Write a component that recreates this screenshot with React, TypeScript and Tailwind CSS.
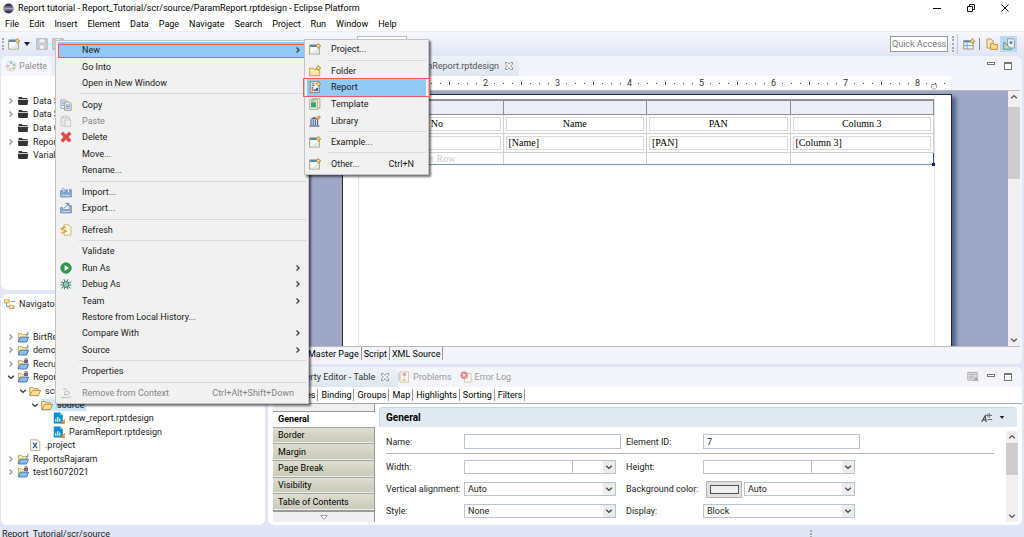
import type { ReactNode } from "react";

/* ---------- icons ---------- */

type IconName =
  | "wizard" | "folderNew" | "report" | "template" | "library" | "copy" | "paste" | "delete"
  | "import" | "export" | "refresh" | "run" | "debug" | "remove" | "project" | "projectJ"
  | "folder" | "darkFolder" | "design" | "xfile" | "palette" | "navigator" | "problems"
  | "errorLog" | "save" | "perspective" | "resource" | "design2" | "pin" | "az";

const sparkle = (
  <path d="M9.4 0.4 L10.3 2.1 L12 3 L10.3 3.9 L9.4 5.6 L8.5 3.9 L6.800 3 L8.5 2.1Z" fill="#f6dc94" stroke="#b98a2e" strokeWidth="0.8" />
);

const drawings: Record<IconName, ReactNode> = {
  wizard: (
    <>
      <rect x="0.7" y="2" width="9.6" height="9" fill="#f7fbfe" stroke="#a9925c" strokeWidth="0.9" />
      <rect x="1.2" y="1.8" width="8" height="2.2" fill="#4d86bd" />
      <path d="M1.5 10.5 L9.8 10.5 L9.8 5 Z" fill="#d8ebf8" />
      {sparkle}
    </>
  ),
  folderNew: (
    <>
      <path d="M0.7 3.2h3.6l1 1.3h5.4v6.3H0.7z" fill="#fbe3a4" stroke="#c9973f" strokeWidth="0.9" />
      <path d="M1.4 6h8.8" stroke="#fff4cf" />
      {sparkle}
    </>
  ),
  report: (
    <>
      <rect x="1.2" y="0.8" width="9" height="10.6" fill="#f6f8fb" stroke="#8b7b55" strokeWidth="0.9" />
      <path d="M2.600 2.800h3M2.600 4.600h3" stroke="#4d6fa0" />
      <rect x="2.600" y="6" width="1.8" height="1.8" fill="#33a05a" />
      <rect x="2.600" y="8.4" width="1.8" height="1.8" fill="#d6404a" />
      <rect x="5" y="8" width="1.8" height="2.200" fill="#d6404a" />
      <rect x="7" y="6.8" width="2.2" height="3.4" fill="#2c6fd1" />
      {sparkle}
    </>
  ),
  template: (
    <>
      <path d="M3.5 0.6h7.4v9.4H3.5z" fill="#f6edd0" stroke="#b59b5e" strokeWidth="0.8" />
      <path d="M0.8 1.8h7.6v9.6H0.8z" fill="#eef6ec" stroke="#8f9d72" strokeWidth="0.8" />
      <rect x="2" y="4.2" width="5" height="5.2" fill="#49a06d" />
      <path d="M2 3h4" stroke="#7c9a8a" strokeWidth="0.8" />
    </>
  ),
  library: (
    <>
      <path d="M0.6 4.6 L5.2 1.8 L9.8 4.6z" fill="#4a6c9e" />
      <path d="M2 5v5M4.2 5v5M6.4 5v5M8.6 5v5" stroke="#39598c" strokeWidth="1.1" />
      <path d="M0.4 11h10" stroke="#39598c" strokeWidth="1.2" />
      <path d="M7 4.5 8 2 10.5 0.6 11.6 2.2 9.4 4.4z" fill="#f0a63c" stroke="#b87a24" strokeWidth="0.4" />
    </>
  ),
  copy: (
    <>
      <path d="M0.8 0.8h4.4l1.6 1.6v7H0.8z" fill="#eaf1fa" stroke="#8a9cb8" strokeWidth="0.8" />
      <path d="M4.6 2.8h4.6l2 2v6.6H4.6z" fill="#dbe8f8" stroke="#a88f52" strokeWidth="0.8" />
      <path d="M5.8 6h4M5.8 7.6h4M5.8 9.2h4M1.8 3h2M1.8 4.8h2M1.8 6.6h2" stroke="#5a8ac6" strokeWidth="0.8" />
    </>
  ),
  paste: (
    <>
      <path d="M1 2h8.4v9H1z" fill="#e8e8e8" stroke="#c2c2c2" strokeWidth="0.9" />
      <path d="M3.4 1h3.4v2H3.4zM5 5h5.6v6.4H5z" fill="#f3f3f3" stroke="#bdbdbd" strokeWidth="0.8" />
    </>
  ),
  delete: (
    <path d="M3 0.9 6 3.8 9 0.9 11.1 2.8 8.3 6 11.1 9.3 9 11.2 6 8.3 3 11.2 0.9 9.3 3.7 6 0.9 2.8z" fill="#e5474b" stroke="#c9363c" strokeWidth="0.5" />
  ),
  import: (
    <>
      <path d="M0.6 4.6v6.4h10.8V3.6h-2v3.2H3V4.6z" fill="#8faed6" stroke="#6284b8" strokeWidth="0.7" />
      <path d="M2.4 2 6.8 5.6M7 3v3H4" fill="none" stroke="#4d7cba" strokeWidth="1" />
      <path d="M2 9.6h8" stroke="#d7e4f4" strokeWidth="0.8" />
    </>
  ),
  export: (
    <>
      <path d="M0.6 5.6V11h10.8V3.6h-1.6v4H2.6v-2z" fill="#8faed6" stroke="#6284b8" strokeWidth="0.7" />
      <path d="M4 6.4 8.6 1.8M5.6 1.5h3.2v3" fill="none" stroke="#4d7cba" strokeWidth="1" />
      <path d="M2 9.6h8" stroke="#d7e4f4" strokeWidth="0.8" />
    </>
  ),
  refresh: (
    <>
      <path d="M4 0.8h4.8l2.2 2.4v8H4z" fill="#fdf7e3" stroke="#c4a868" strokeWidth="0.8" />
      <path d="M6 4C5 2.600 2.400 2.800 2 5M0.600 4.200 2 5.600 3.600 4.400M1.400 8C2.400 9.600 5 9.200 5.400 7M3.800 7.600 5.400 6.400 6.800 7.800" fill="none" stroke="#dba035" strokeWidth="1.2" />
    </>
  ),
  run: (
    <>
      <circle cx="6" cy="6" r="5.3" fill="#2f9a4a" stroke="#1f7a3b" strokeWidth="0.6" />
      <path d="M4.6 2.9v6.2L9 6z" fill="#fff" />
    </>
  ),
  debug: (
    <>
      <path d="M0.8 4.2 3.6 5M11.2 4.2 8.4 5M0.6 7h10.8M1.4 10.4 3.8 8.4M10.6 10.4 8.2 8.4M4 1.2 5 3.6M8 1.2 7 3.6M4.4 11.4V9M7.6 11.4V9" stroke="#3f7a69" strokeWidth="1" />
      <ellipse cx="6" cy="6.4" rx="2.8" ry="3.1" fill="#8cc5ae" stroke="#3a7666" strokeWidth="0.9" />
    </>
  ),
  remove: (
    <>
      <path d="M3 2.4c2-1.4 4 0 4 2 2.4-.6 3 3 .8 3.4H4" fill="none" stroke="#b9b9b9" strokeWidth="1" />
      <path d="M5 4v4M1 10.6h8M9 9.2l2.4 1.6" stroke="#b9b9b9" strokeWidth="1" />
    </>
  ),
  project: (
    <>
      <path d="M1.4 10V2.4h3l.8 1h4.6V10z" fill="#fae5a8" stroke="#c29a4a" strokeWidth="0.8" />
      <path d="M1.2 11 3.2 6.2h8.4L9.6 11z" fill="#8dbbea" stroke="#2f67ad" strokeWidth="0.8" />
      <path d="M10.9 0.8v2.6c0 1-1.4 1-1.4 0" fill="none" stroke="#3673c0" strokeWidth="0.9" />
    </>
  ),
  projectJ: (
    <>
      <path d="M1.4 10V2.4h3l.8 1h4.6V10z" fill="#fae5a8" stroke="#c29a4a" strokeWidth="0.8" />
      <path d="M1.2 11 3.2 6.2h8.4L9.6 11z" fill="#8dbbea" stroke="#2f67ad" strokeWidth="0.8" />
      <rect x="7" y="1.6" width="4" height="3.4" fill="#75628a" />
      <path d="M8 1.6v-1h2v1" stroke="#75628a" fill="none" strokeWidth="0.8" />
    </>
  ),
  folder: (
    <>
      <path d="M0.8 10.4V2.6h3.4l1 1.2h4v1.6" fill="#fdebb8" stroke="#c08a35" strokeWidth="0.9" />
      <path d="M1 10.6 3.4 5.4h8.2L9.4 10.6z" fill="#fbdc92" stroke="#c08a35" strokeWidth="0.9" />
    </>
  ),
  darkFolder: (
    <>
      <path d="M1.6 4V2h3.2l.8 1h4.8v1z" fill="#333" />
      <path d="M0.8 4.8h10.4L10.6 10H1.4z" fill="#333" />
    </>
  ),
  design: (
    <>
      <path d="M0.8 0.4h6.6l2.4 2.6v8.4H0.8z" fill="#0b8fd0" />
      <path d="M7.4 0.4v2.6h2.4z" fill="#9fd6f2" />
      <path d="M2.8 9.8V7M4.8 9.8V5M6.8 9.8V6.4" stroke="#fff" strokeWidth="1.1" />
      <path d="M7.2 12 11.8 12 11.8 6.6z" fill="#f08a24" />
    </>
  ),
  xfile: (
    <>
      <path d="M1.6 0.8h7.2l2 2v8.6H1.6z" fill="#fbfaf4" stroke="#a5a184" strokeWidth="0.8" />
      <path d="M4 3.6 8 9.2M8 3.6 4 9.2" stroke="#2f5d9c" strokeWidth="1.2" />
    </>
  ),
  palette: (
    <>
      <circle cx="6" cy="6" r="5" fill="#eef1f6" stroke="#c3ccd8" strokeWidth="0.7" />
      <circle cx="6" cy="2.8" r="1.3" fill="#8fc7e8" />
      <circle cx="9" cy="4.8" r="1.3" fill="#8fd09a" />
      <circle cx="8.6" cy="8.2" r="1.3" fill="#f0a98f" />
      <circle cx="5" cy="9" r="1.3" fill="#f2d47f" />
      <circle cx="2.9" cy="6" r="1.3" fill="#e7a7c3" />
    </>
  ),
  navigator: (
    <>
      <path d="M0.6 1.4h2l.5.7h2.2v2.8H0.6zM5.2 7h2l.5.7H10v2.8H5.2z" fill="#fbe0a0" stroke="#c08a35" strokeWidth="0.7" />
      <path d="M2.6 5v3.6h2.6M6.6 3.4h4.8" stroke="#4d86bd" fill="none" strokeWidth="0.8" />
    </>
  ),
  problems: (
    <>
      <path d="M2 0.8h8.6v10.4H2z" fill="#f8f5ee" stroke="#cbbfa3" strokeWidth="0.8" />
      <circle cx="6.4" cy="3.4" r="1.8" fill="#eda0a0" />
      <path d="M4 10 6 6.4 8.4 10z" fill="#f0cd7c" />
      <path d="M0.8 2v8" stroke="#a9bfe0" />
    </>
  ),
  errorLog: (
    <>
      <path d="M3.6 2.4h7.6v8.8H4.6z" fill="#fbf8ee" stroke="#cdbf98" strokeWidth="0.8" />
      <circle cx="4.2" cy="4.2" r="3.5" fill="#e88e92" stroke="#d97379" strokeWidth="0.5" />
      <path d="M2.8 2.8l2.8 2.8M5.6 2.8 2.8 5.6" stroke="#fff" strokeWidth="1" />
    </>
  ),
  save: (
    <>
      <path d="M0.8 0.8h10.4v10.4H0.8z" fill="#d5d5d8" stroke="#a9a9ae" strokeWidth="0.9" />
      <path d="M3 0.8h6v4H3zM3.4 7h5.2v4.2H3.4z" fill="#f4f4f6" stroke="#b4b4b8" strokeWidth="0.7" />
    </>
  ),
  perspective: (
    <>
      <rect x="0.8" y="2.6" width="9.4" height="8.4" fill="#eef5fc" stroke="#9c8a5c" strokeWidth="0.9" />
      <path d="M0.8 3.6h9.4" stroke="#4d86bd" strokeWidth="1.6" />
      <path d="M4 4.4V11M1 7.6h9" stroke="#6a9ccc" strokeWidth="0.9" />
      {sparkle}
    </>
  ),
  resource: (
    <>
      <path d="M1 1h4.2l2 2v7H1z" fill="#f4e5c0" stroke="#b58f4c" strokeWidth="0.9" />
      <path d="M4.6 5.4h2.6l.8 1h3.4v5H4.6z" fill="#ffd978" stroke="#c08a2a" strokeWidth="0.9" />
    </>
  ),
  design2: (
    <>
      <path d="M4.6 0.8h5l1.8 1.8v7.4H4.6z" fill="#e6f2fb" stroke="#a08f64" strokeWidth="0.9" />
      <path d="M0.8 4v7.2h7.6z" fill="#c3ddc0" stroke="#5d8a7b" strokeWidth="0.9" />
      <circle cx="8" cy="4.6" r="1.6" fill="#4a8fd4" />
    </>
  ),
  pin: (
    <>
      <path d="M0.8 1.4h9.4v7.8H0.8z" fill="#e4e4e6" stroke="#a4a4a8" strokeWidth="0.9" />
      <path d="M2 3.4h7M2 5.2h5M2 7h5" stroke="#a4a4a8" strokeWidth="0.8" />
      <path d="M7.4 6l4 4.4M9.8 6.6 7 10" stroke="#8e8e92" strokeWidth="1" />
    </>
  ),
  az: (
    <>
      <path d="M0.6 10 4.2 3.8 5.2 10M2 7.8h3" fill="none" stroke="#4f4f4f" strokeWidth="1.2" />
      <path d="M5.8 3.4H11M8.2 1v5M6.6 2.4 5.4 3.4 6.6 4.6M6.6 7.6h4.6" fill="none" stroke="#666" strokeWidth="1" />
    </>
  ),
};

function Icon({ name }: { name: IconName }) {
  return (
    <svg viewBox="0 0 12 12" aria-hidden="true" className="size-3 shrink-0">
      {drawings[name]}
    </svg>
  );
}

function Chevron({ dir, className }: { dir: "right" | "down" | "up"; className: string }) {
  const d = { right: "M2.5 1.5 5 4 2.5 6.5", down: "M1.2 2.8 4 5.4 6.8 2.8", up: "M1.2 5.2 4 2.6 6.8 5.2" }[dir];
  return (
    <svg viewBox="0 0 8 8" aria-hidden="true" className={className}>
      <path d={d} fill="none" stroke="currentColor" strokeWidth="1.4" />
    </svg>
  );
}

function CloseX() {
  return (
    <svg viewBox="0 0 8 8" className="size-2 shrink-0" aria-hidden="true">
      <path d="M.5.5h1.7L4 2.4 5.8.5H7.5v1.7L5.6 4 7.5 5.8v1.7H5.8L4 5.6 2.2 7.5H.5V5.8L2.4 4 .5 2.2z" fill="#fff" stroke="#777" strokeWidth="0.8" />
    </svg>
  );
}

function PanelButtons() {
  return (
    <div className="flex items-center gap-[9px]">
      <button aria-label="Minimize" className="mb-1 h-[3px] w-2 border border-[#777] bg-white" />
      <button aria-label="Maximize" className="size-2 border border-t-2 border-[#777] bg-white" />
    </div>
  );
}

/* ---------- menus ---------- */

type Entry = { label: string; icon?: IconName; sub?: boolean; off?: boolean; keys?: string; active?: boolean } | null;

const contextMenu: Entry[] = [
  { label: "New", sub: true, active: true },
  { label: "Go Into" },
  { label: "Open in New Window" },
  null,
  { label: "Copy", icon: "copy" },
  { label: "Paste", icon: "paste", off: true },
  { label: "Delete", icon: "delete" },
  { label: "Move..." },
  { label: "Rename..." },
  null,
  { label: "Import...", icon: "import" },
  { label: "Export...", icon: "export" },
  null,
  { label: "Refresh", icon: "refresh" },
  null,
  { label: "Validate" },
  { label: "Run As", icon: "run", sub: true },
  { label: "Debug As", icon: "debug", sub: true },
  { label: "Team", sub: true },
  { label: "Restore from Local History..." },
  { label: "Compare With", sub: true },
  { label: "Source", sub: true },
  null,
  { label: "Properties" },
  null,
  { label: "Remove from Context", icon: "remove", off: true, keys: "Ctrl+Alt+Shift+Down" },
];

const newMenu: Entry[] = [
  { label: "Project...", icon: "wizard" },
  null,
  { label: "Folder", icon: "folderNew" },
  { label: "Report", icon: "report", active: true },
  { label: "Template", icon: "template" },
  { label: "Library", icon: "library" },
  null,
  { label: "Example...", icon: "wizard" },
  null,
  { label: "Other...", icon: "wizard", keys: "Ctrl+N" },
];

function Menu({ entries, className, wide }: { entries: Entry[]; className: string; wide?: boolean }) {
  return (
    <div role="menu" className={`absolute flex flex-col border border-[#c4c4c4] bg-[#f1f1f1] px-0.5 pt-px pb-0.5 shadow-[2px_2px_2px_rgba(0,0,0,0.55)] ${className}`}>
      {entries.map((e, i) =>
        e === null ? (
          <div key={i} role="separator" className="flex h-[5px] items-center pl-[21px]">
            <span className="h-px w-full bg-[#d9d9d9]" />
          </div>
        ) : (
          <button
            key={i}
            role="menuitem"
            disabled={e.off}
            className={`relative flex min-h-0 grow basis-4 items-center text-left ${e.active ? "bg-[#91c9f7]" : ""} ${e.off ? "text-[#858585]" : "text-[#1a1a1a]"}`}
          >
            <span className="mr-2 flex w-4 shrink-0 justify-center">{e.icon && <Icon name={e.icon} />}</span>
            <span className="grow">{e.label}</span>
            {e.keys && <span className="pr-3">{e.keys}</span>}
            {e.sub && <Chevron dir="right" className="mr-1 size-2 text-[#444]" />}
            {e.active && <span className={`absolute border border-[#f0595e] ${wide ? "inset-x-0 top-0.5 bottom-0" : "-inset-x-1 -inset-y-px"}`} />}
          </button>
        )
      )}
    </div>
  );
}

/* ---------- trees ---------- */

type Node = { label: string; icon: IconName; level: number; state?: "open" | "closed"; selected?: boolean };

const palette: Node[] = [
  { label: "Data Sources", icon: "darkFolder", level: 0, state: "closed" },
  { label: "Data Sets", icon: "darkFolder", level: 0, state: "closed" },
  { label: "Data Cubes", icon: "darkFolder", level: 0 },
  { label: "Report Parameters", icon: "darkFolder", level: 0, state: "closed" },
  { label: "Variables", icon: "darkFolder", level: 0 },
];

const files: Node[] = [
  { label: "BirtReports", icon: "project", level: 0, state: "closed" },
  { label: "demo", icon: "project", level: 0, state: "closed" },
  { label: "Recruitment", icon: "projectJ", level: 0, state: "closed" },
  { label: "Report_Tutorial", icon: "projectJ", level: 0, state: "open" },
  { label: "scr", icon: "folder", level: 1, state: "open" },
  { label: "source", icon: "folder", level: 2, state: "open", selected: true },
  { label: "new_report.rptdesign", icon: "design", level: 3 },
  { label: "ParamReport.rptdesign", icon: "design", level: 3 },
  { label: ".project", icon: "xfile", level: 1 },
  { label: "ReportsRajaram", icon: "project", level: 0, state: "closed" },
  { label: "test16072021", icon: "projectJ", level: 0, state: "closed" },
];

const indents = ["pl-1", "pl-4", "pl-7", "pl-10"];

function Tree({ nodes, className }: { nodes: Node[]; className: string }) {
  return (
    <ul className={`flex flex-col ${className}`}>
      {nodes.map((n) => (
        <li key={n.label} className={`flex min-h-0 flex-1 items-center ${indents[n.level]}`}>
          <span className="w-3 shrink-0">
            {n.state && <Chevron dir={n.state === "open" ? "down" : "right"} className={n.state === "open" ? "ml-0.5 size-2 text-[#333]" : "ml-0.5 size-2 text-[#999]"} />}
          </span>
          <span className={`flex items-center gap-1 ${n.selected ? "bg-[#cce8ff] pr-0.5" : ""}`}>
            <Icon name={n.icon} />
            {n.label}
          </span>
        </li>
      ))}
    </ul>
  );
}

/* ---------- property form ---------- */

function Caret() {
  return (
    <span className="pointer-events-none absolute inset-y-px right-px flex w-3 items-center justify-center bg-[#ececec]">
      <Chevron dir="down" className="size-2 text-[#444]" />
    </span>
  );
}

function Select({ id, value }: { id: string; value: string }) {
  return (
    <span className="relative flex grow">
      <select id={id} className="h-[14px] w-full appearance-none border border-[#b8c4d2] bg-white pl-[3px] leading-3" defaultValue={value}>
        <option>{value}</option>
      </select>
      <Caret />
    </span>
  );
}

function Measure({ id }: { id: string }) {
  return (
    <span className="flex w-[152px]">
      <input id={id} className="h-[14px] min-w-0 flex-1 border border-[#b8c4d2] bg-white px-1" />
      <span className="relative flex w-[43px] shrink-0">
        <select aria-label={`${id} unit`} className="h-[14px] w-full appearance-none border border-l-0 border-[#b8c4d2] bg-white" defaultValue="">
          <option value=""></option>
        </select>
        <Caret />
      </span>
    </span>
  );
}

function Scrollbar({ thumb }: { thumb: string }) {
  return (
    <div className="flex w-3 shrink-0 flex-col items-center bg-[#f0f0f0] text-[#555]">
      <Chevron dir="up" className="my-0.5 size-2" />
      <div className={`w-full bg-[#cdcdcd] ${thumb}`} />
      <div className="grow" />
      <Chevron dir="down" className="my-0.5 size-2" />
    </div>
  );
}

const menuBar = ["File", "Edit", "Insert", "Element", "Data", "Page", "Navigate", "Search", "Project", "Run", "Window", "Help"];
const propertyTabs = ["Properties", "Binding", "Groups", "Map", "Highlights", "Sorting", "Filters"];
const sections = ["Border", "Margin", "Page Break", "Visibility", "Table of Contents"];
const cell = "border border-[#d0d0d0] p-0.5";
const cellBox = "h-[14px] border border-[#d8d8d8] px-0.5 leading-3";

export default function App() {
  return (
    <div className="relative flex h-screen flex-col overflow-hidden bg-[#e0e6f6] font-[Roboto,sans-serif] text-[9px] leading-3 text-[#222]">
      <header className="flex h-4 shrink-0 items-center bg-white pl-[3px] text-black">
        <svg viewBox="0 0 12 12" className="mr-1 size-[11px]" aria-hidden="true">
          <circle cx="6" cy="6" r="5.5" fill="#3b315f" />
          <path d="M1 4.5h10M.6 6h10.8M1 7.5h10" stroke="#e6e2ef" strokeWidth="0.7" />
          <path d="M1.6 2.6A5.5 5.5 0 0 0 1.6 9.4" stroke="#e79a3c" fill="none" />
        </svg>
        <h1 className="grow">Report tutorial - Report_Tutorial/scr/source/ParamReport.rptdesign - Eclipse Platform</h1>
        <div className="flex items-center gap-[26px] pr-[15px]">
          <button aria-label="Minimize window" className="h-px w-2 bg-black" />
          <button aria-label="Restore window">
            <svg viewBox="0 0 8 8" className="size-2"><path d="M.5 2.5h5v5h-5zM2.5 2.5v-2h5v5h-2" fill="none" stroke="#111" /></svg>
          </button>
          <button aria-label="Close window">
            <svg viewBox="0 0 8 8" className="size-2"><path d="M.5.5l7 7M7.5.5l-7 7" stroke="#111" /></svg>
          </button>
        </div>
      </header>

      <nav className="flex h-[15px] shrink-0 items-center gap-[10px] bg-white pl-[5px] text-black">
        {menuBar.map((m) => (
          <button key={m}>{m}</button>
        ))}
      </nav>

      <div className="flex h-[25px] shrink-0 items-center border-t border-[#eceef5] bg-linear-to-b from-[#f7f8fd] to-[#e0e6f6] pl-0.5">
        <span className="mr-1 h-3 border-l-2 border-dotted border-[#aaa]" />
        <button aria-label="New" className="flex items-center gap-1">
          <Icon name="wizard" />
          <svg viewBox="0 0 6 4" className="h-1 w-1.5"><path d="M0 0h6L3 4z" fill="#222" /></svg>
        </button>
        <button aria-label="Save" className="ml-1.5"><Icon name="save" /></button>
        <button aria-label="Save all" className="ml-1"><Icon name="save" /></button>
        <span className="mb-px ml-[293px] h-[15px] w-[50px] border border-[#bbb] bg-white" />
        <div className="grow" />
        <input aria-label="Quick Access" placeholder="Quick Access" className="h-4 w-[58px] border border-[#999] bg-white p-0 pl-px placeholder:text-[#777]" />
        <span className="ml-1 h-4 border-l-2 border-dotted border-[#aaa]" />
        <span className="ml-[3px] h-5 w-px bg-[#c3c9da]" />
        <button aria-label="Open perspective" className="ml-[5px]"><Icon name="perspective" /></button>
        <span className="mx-1 h-3 w-px bg-[#888]" />
        <button aria-label="Resource" className="mx-0.5"><Icon name="resource" /></button>
        <button aria-label="Report design" className="mr-[7px] flex h-4 w-[17px] items-center justify-center bg-[#b5dafa]"><Icon name="design2" /></button>
      </div>

      <main className="flex min-h-0 flex-1 gap-[3px] pr-0.5">
        <div className="flex w-[265px] shrink-0 flex-col gap-1 pl-px">
          <section className="flex-1 rounded-md bg-white">
            <div className="flex h-5 items-center rounded-t-md bg-[#eaeef8]">
              <div className="flex h-5 items-center gap-0.5 rounded-t-md bg-[#f6f7fc] pr-1 pl-1 text-[#8e8e8e]">
                <Icon name="palette" />
                Palette
              </div>
            </div>
            <Tree nodes={palette} className="mt-[18px] h-[68px]" />
          </section>
          <section className="h-[231px] rounded-md bg-white">
            <div className="flex h-5 items-center gap-[3px] pl-[3px]">
              <Icon name="navigator" />
              Navigator
            </div>
            <Tree nodes={files} className="mt-4 h-[149px]" />
          </section>
        </div>

        <div className="flex min-w-0 flex-1 flex-col gap-[3px]">
          <section className="flex min-h-0 flex-1 flex-col rounded-md bg-[#f4f5fb] pr-0.5">
            <div className="flex h-5 shrink-0 items-center">
              <div className="flex h-5 items-center gap-1.5 rounded-t-lg bg-linear-to-b from-[#eef3f8] to-[#dde7f0] pr-1.5 pl-[138px] text-[#555]">
                ParamReport.rptdesign
                <CloseX />
              </div>
              <div className="grow" />
              <div className="mr-2 mb-px"><PanelButtons /></div>
            </div>
            <div className="flex h-[14px] shrink-0 pl-[69px]">
              <div className="relative flex w-[614px] items-center bg-white text-[#333]">
                {Array.from({ length: 68 }, (_, i) => (
                  <span key={i} className="flex w-[9px] shrink-0 justify-center">
                    {i % 8 === 0 ? i / 8 : <i className={i % 8 === 4 ? "h-[3px] w-px bg-[#444]" : "size-px bg-[#444]"} />}
                  </span>
                ))}
                <svg viewBox="0 0 6 6" className="absolute right-3.5 bottom-0 size-1.5" aria-hidden="true">
                  <path d="M.5.5h5v3L3 5.5.5 3.5z" fill="#fff" stroke="#888" strokeWidth="0.8" />
                </svg>
              </div>
            </div>
            <div className="ml-[3px] flex min-h-0 flex-1 overflow-hidden border-t border-b border-[#bbb] bg-[#9ea7c6]">
              <div className="mt-[3px] ml-[71px] w-[610px] shrink-0 border-t border-r border-l border-[#222b3a] bg-white shadow-[4px_3px_4px_#4a6284]">
                <div className="mr-4 ml-[15px] h-full border-r border-l border-[#d6e6f6] pt-1">
                  <table className="w-full table-fixed border-collapse font-['Liberation_Serif',serif] text-[10px] text-black">
                    <thead>
                      <tr>
                        {["a", "b", "c", "d"].map((k) => (
                          <td key={k} className="h-[14px] border border-t-2 border-[#8f8f8f] bg-[#ecedf7]" />
                        ))}
                      </tr>
                    </thead>
                    <tbody>
                      <tr>
                        {["Sr No", "Name", "PAN", "Column 3"].map((c) => (
                          <th key={c} className={`font-normal ${cell}`}><div className={cellBox}>{c}</div></th>
                        ))}
                      </tr>
                      <tr>
                        {["[Sr No]", "[Name]", "[PAN]", "[Column 3]"].map((c) => (
                          <td key={c} className={cell}><div className={cellBox}>{c}</div></td>
                        ))}
                      </tr>
                      <tr className="text-[#ccc]">
                        <td className="h-3 border border-[#d0d0d0] border-b-[#7d8db8] pl-12 leading-[11px]">Footer Row</td>
                        <td className="border border-[#d0d0d0] border-b-[#7d8db8]" />
                        <td className="border border-[#d0d0d0] border-b-[#7d8db8]" />
                        <td className="relative border border-[#d0d0d0] border-r-[#34518f] border-b-[#7d8db8]">
                          <span className="absolute -right-0.5 -bottom-0.5 size-[3px] bg-[#0a246a]" />
                        </td>
                      </tr>
                    </tbody>
                  </table>
                </div>
              </div>
              <div className="grow" />
              <Scrollbar thumb="mt-1 h-[72px]" />
            </div>
            <div className="flex h-[17px] shrink-0 items-start pl-1 text-black">
              <button className="border-r border-[#999] px-[3px] pt-px">Layout</button>
              <button className="border-r border-[#999] px-0.5 pt-px">Master Page</button>
              <button className="border-r border-[#999] px-0.5 pt-px">Script</button>
              <button className="border-r border-[#999] px-0.5 pt-px">XML Source</button>
            </div>
          </section>

          <section className="flex h-[158px] shrink-0 flex-col rounded-md bg-white">
            <div className="flex h-5 shrink-0 items-center rounded-t-md bg-[#f4f5fb] text-[#9a9a9a]">
              <div className="flex h-5 items-center gap-1.5 rounded-t-lg bg-linear-to-b from-[#eef3f8] to-[#dde7f0] pr-[9px] pl-[19px] text-[#333]">
                Property Editor - Table
                <CloseX />
              </div>
              <div className="flex items-center gap-[3px]"><Icon name="problems" />Problems</div>
              <div className="ml-2 flex items-center gap-[3px]"><Icon name="errorLog" />Error Log</div>
              <div className="grow" />
              <div className="mr-2"><Icon name="pin" /></div>
              <div className="mr-2.5"><PanelButtons /></div>
            </div>
            <div className="flex h-[17px] shrink-0 items-center border-b border-[#aaa] pl-[3px] text-black">
              {propertyTabs.map((t) => (
                <button key={t} className="border-r border-[#999] pr-0.5 pl-[3px]">{t}</button>
              ))}
            </div>
            <div className="flex min-h-0 flex-1 pb-[3px]">
              <div className="ml-[5px] flex w-[102px] shrink-0 flex-col text-black">
                <div className="h-2 shrink-0 border-r border-b border-[#999] bg-[#efefef]" />
                <button className="flex-1 pl-[5px] text-left font-bold">General</button>
                {sections.map((s) => (
                  <button key={s} className="flex-1 border-t border-r border-b border-t-[#a5a5a5] border-r-[#999] border-b-[#eee] bg-linear-to-b from-[#deded0] to-[#c9cab8] pl-[5px] text-left">{s}</button>
                ))}
                <button aria-label="Scroll sections" className="flex h-3 shrink-0 items-center justify-center border-t-2 border-r border-[#999] bg-[#efefef]">
                  <svg viewBox="0 0 8 5" className="h-[5px] w-2"><path d="M.7.5h6.6L4 4.3z" fill="#fff" stroke="#777" strokeWidth="0.7" /></svg>
                </button>
              </div>
              <div className="mt-[3px] mr-1 ml-1 flex min-w-0 flex-1 flex-col">
                <div className="mr-px flex h-5 shrink-0 items-center rounded-t border-t border-l border-[#cbd8e6] bg-[#e0e8f2] pl-1.5 text-black">
                  <h2 className="grow text-[10px] font-bold">General</h2>
                  <Icon name="az" />
                  <svg viewBox="0 0 6 4" className="mr-3 ml-1.5 h-[3px] w-1.5"><path d="M0 0h6L3 4z" fill="#222" /></svg>
                </div>
                <div className="flex min-h-0 flex-1 pt-1">
                  <form className="mr-3 ml-[7px] min-w-0 flex-1 pt-[3px]">
                    <div className="flex h-5 items-center border-b border-[#b5b5b5] pb-1">
                      <label htmlFor="name" className="w-[78px] shrink-0">Name:</label>
                      <input id="name" className="h-[15px] w-[157px] border border-[#b8c4d2] px-1" />
                      <label htmlFor="element" className="ml-[5px] w-[77px] shrink-0">Element ID:</label>
                      <input id="element" defaultValue="7" className="h-[15px] w-[157px] border border-[#b8c4d2] px-[3px]" />
                    </div>
                    <div className="mt-1.5 grid grid-cols-[78px_152px_10px_77px_152px] items-center gap-y-2">
                      <label htmlFor="width">Width:</label>
                      <Measure id="width" />
                      <span />
                      <label htmlFor="height">Height:</label>
                      <Measure id="height" />
                      <label htmlFor="valign" className="whitespace-nowrap">Vertical alignment:</label>
                      <Select id="valign" value="Auto" />
                      <span />
                      <label htmlFor="bgcolor" className="whitespace-nowrap">Background color:</label>
                      <span className="flex items-center">
                        <button type="button" aria-label="Pick color" className="-my-1 mr-0.5 ml-[3px] flex h-[17px] w-9 shrink-0 items-center justify-center border border-[#b5b5b5] bg-[#e1e1e1]">
                          <span className="h-[9px] w-[29px] border border-[#555] bg-[#f0f0f0]" />
                        </button>
                        <Select id="bgcolor" value="Auto" />
                      </span>
                      <label htmlFor="style">Style:</label>
                      <Select id="style" value="None" />
                      <span />
                      <label htmlFor="display">Display:</label>
                      <Select id="display" value="Block" />
                    </div>
                  </form>
                  <Scrollbar thumb="h-8" />
                </div>
              </div>
            </div>
          </section>
        </div>
      </main>

      <footer className="flex h-3 shrink-0 items-center pt-[5px] pl-0.5">
        <span className="w-[808px]">Report_Tutorial/scr/source</span>
        <span className="h-2 border-l-2 border-dotted border-[#aaa]" />
      </footer>

      <Menu entries={contextMenu} wide className="top-10 left-[55px] h-[364px] w-[254px]" />
      <Menu entries={newMenu} className="top-[39px] left-[304px] h-[136px] w-[125px]" />
    </div>
  );
}
